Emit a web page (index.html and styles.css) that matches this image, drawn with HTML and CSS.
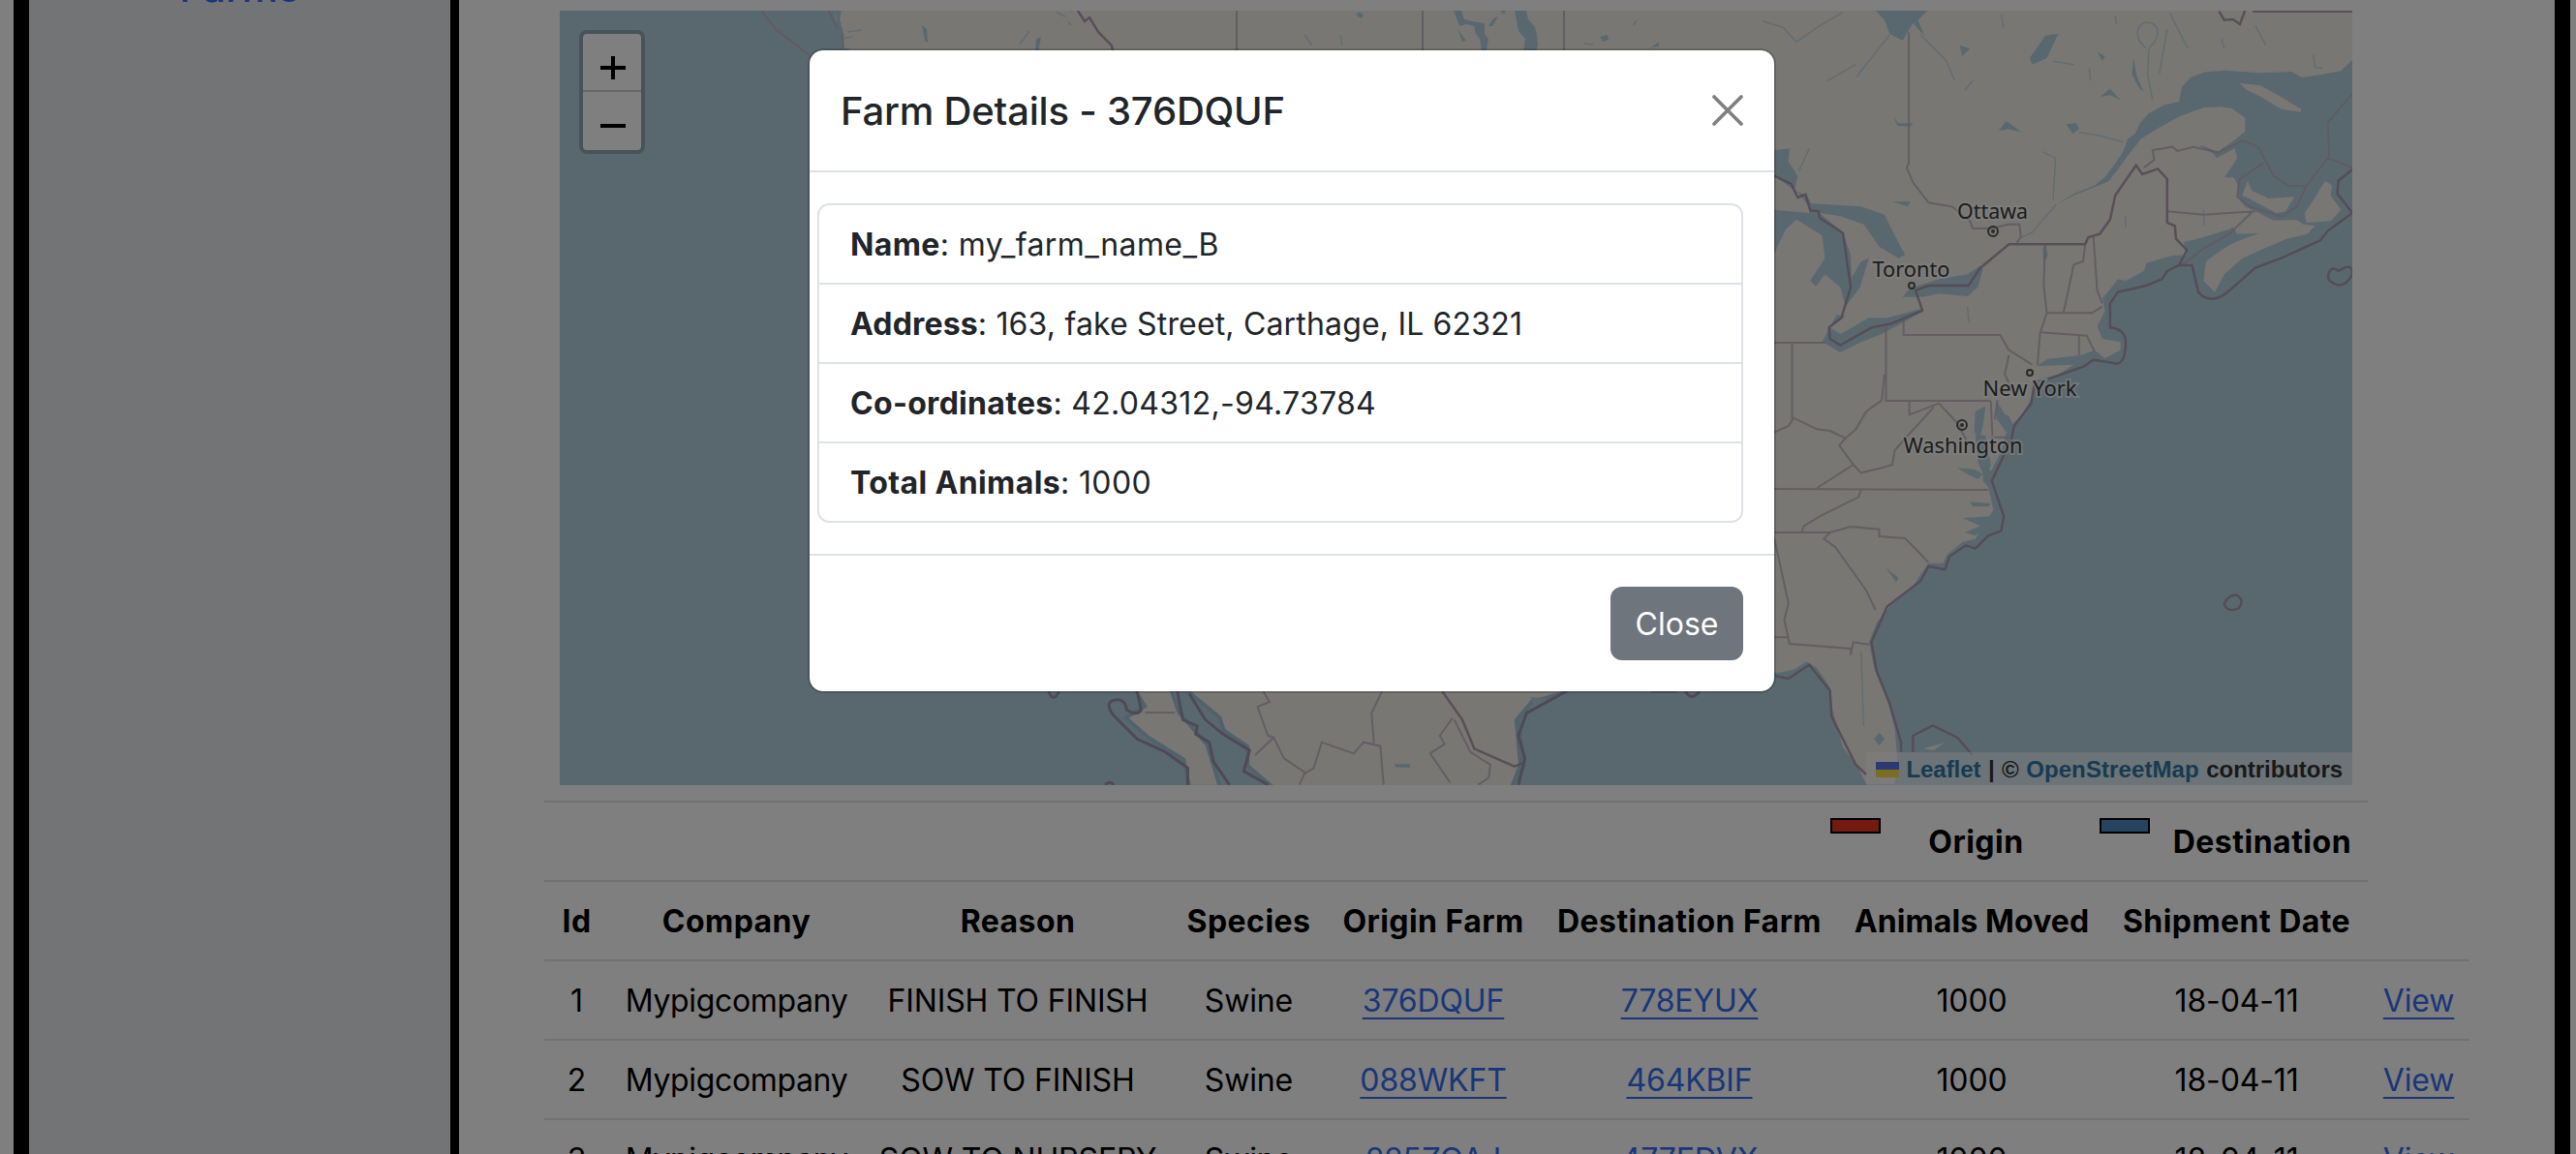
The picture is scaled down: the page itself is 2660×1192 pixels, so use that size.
FILE: index.html
```html
<!DOCTYPE html>
<html lang="en">
<head>
<meta charset="utf-8">
<title>Shipments</title>
<link rel="stylesheet" href="styles.css">
</head>
<body>
<div class="app">
  <nav class="sidebar"><a class="sidebar-link" href="#">Farms</a></nav>
  <main class="content">
    <section class="map">
      <svg class="map-tiles" viewBox="578 11 1851 800" preserveAspectRatio="none">
        <!-- North-west coast -->
        <path class="land" d="M862 11L863 20L868 32L871 36L871 50L876 50L884 58L1900 58V11Z"/>
        <path class="admin" d="M786 11L801 30L837 58M856 11L862 24L870 36L871 50M1277 11V58M1469 11V58M1615 11V58"/>
        <path class="country" d="M1113 11L1120 22L1125 18L1134 33L1148 47L1150 58"/>
        <path class="water" d="M862 11H869L867 20L870 30L872 38L866 32ZM952 26L957 30L958 44L955 42ZM1070 40L1075 38L1072 55H1069ZM1400 15L1404 12L1408 16L1405 19ZM1501 11H1509L1512 20L1520 22L1528 23L1533 24L1533 35L1537 40L1535 52H1530L1528 40L1524 35L1522 27L1514 25L1507 27ZM1505 30L1514 42L1510 43ZM1537 27L1542 19L1547 17L1541 27ZM1549 11H1555L1553 15ZM1564 11H1576L1578 20L1585 28L1587 36L1588 47L1586 53H1573L1575 40L1568 32ZM1652 38L1660 36L1661 41L1655 43ZM1703 50L1715 42L1726 41L1720 46Z"/>
        <path class="stream" d="M870 40L880 38M875 33L890 31M1053 46L1063 32M1103 22L1106 26M1091 13L1100 17M1347 36L1355 47M1384 36L1386 47M1636 45L1645 46M1687 26L1690 21M1778 27L1786 31M1850 50L1820 28L1805 24"/>
        <!-- Eastern seaboard -->
        <g transform="translate(1820 0) scale(.5357 .33333)">
          <path class="land" d="M-200 33H1137V185L1115 220L1080 230L1040 240L1020 222L960 226L890 218L850 224L825 240L808 270L803 315L775 325L758 340L745 350L728 380L718 415L704 430L695 470L678 510L660 548L640 575L600 600L565 635L600 605L645 577L667 562L685 525L705 480L730 430L765 395L805 360L850 334L880 331L905 336L930 365L930 408L905 440L885 462L878 472L850 452L840 450L868 475L875 490L910 460L915 490L905 515L890 550L908 550L915 570L918 615L930 640L950 655L900 710L850 735L812 750L817 790L790 792L740 815L735 840L700 870L685 865L665 905L655 925L660 965L645 1010L655 1050L690 1060L690 1085L660 1110L640 1085L615 1100L550 1112L527 1135L600 1130L570 1160L525 1180L520 1230L500 1285L478 1320L470 1290L450 1240L452 1300L470 1340L460 1400L440 1460L425 1425L425 1490L435 1510L445 1580L410 1670L385 1680L355 1720L348 1745L320 1745L300 1790L290 1820L245 1880L220 1930L205 1990L215 2070L240 2160L255 2260L260 2360L255 2430H200L185 2380L155 2315L135 2200L130 2130L105 2070L85 2050L60 2075L30 2085L-200 2060Z"/>
          <path class="land" d="M905 700L950 655L985 683L1030 682L1042 695L1065 700L1050 725L1010 740L960 775L925 800L890 850L872 905L850 870L855 810L880 780L905 755L935 735L960 722L915 725ZM1085 560L1098 575L1095 605L1115 650L1095 685L1048 690L1045 660L1058 630ZM935 560L943 590L975 615L1025 610L1008 655L990 660L955 630L925 605ZM920 258L960 265L1005 305L1038 338V347L1000 338L960 300L930 275ZM310 2320L350 2302L330 2325Z"/>
          <path class="water" d="M218 33H318L300 62L312 112L290 72L270 125L245 105L235 62ZM23 465L52 460L50 500L68 545L62 590L85 605L105 660L90 640L70 600L23 545ZM90 630L190 640L235 665L255 730L275 790L262 800L225 765L195 695L150 670L110 660L155 720L170 790L172 860L190 810L205 800L188 890L160 950L150 890L120 850L103 888L92 870L120 800L115 730L65 680L45 710L30 760L23 785V650L90 660ZM143 975L160 980L130 1015L150 1035L205 985L240 985L305 958L310 965L230 1035L190 1060L150 1092L115 1060ZM300 885L340 865L395 850L418 825L425 835L415 890L395 918L340 910L310 920H270L280 900ZM570 105L548 180L520 200L515 180L545 110ZM253 362L262 382H290L285 392L260 390ZM585 385L605 382L610 400L598 415ZM455 405L470 375L500 410L475 400ZM380 140L400 150L385 175ZM645 160L660 175L655 190ZM715 180L722 240L735 285L725 270L712 230ZM545 755L550 790L542 820L540 770ZM250 625L285 625L280 640ZM650 300L670 275L690 310L670 295ZM408 1340L410 1275L430 1258L425 1320L420 1350ZM455 1275L475 1290L485 1320L470 1330ZM410 1345L430 1350L440 1440L430 1490L415 1430ZM375 1450L410 1455L425 1470L415 1485L390 1465ZM400 1555L440 1560L435 1570L405 1570ZM385 1605L440 1600L450 1620L410 1660L390 1650L420 1630ZM215 2290L225 2270L235 2290L225 2310ZM238 1760L262 1790L258 1805Z"/>
          <path class="stream" d="M740 150C710 110 725 70 740 70C765 70 770 110 745 150L742 230L752 310M245 108L180 240M305 108L355 190L370 250M610 410L650 420L695 440M565 635L520 720L500 735M850 650L852 700M780 90L765 230M680 50L682 75M885 120L890 150M785 40L820 150M540 470L565 490L560 620M65 130L110 80L155 38M0 65L40 85L65 130M90 460L70 530M125 250L180 200M460 45L465 85M405 250L390 280M700 670V705M395 950L398 1000M190 2020L195 2250M600 200L560 190M630 210L632 250M950 80L970 140M1062 170L1065 210H1080"/>
          <path class="admin" d="M282 100V505L278 520L290 565L320 628L365 640L400 685L405 708L440 708L475 695H495L498 735L490 752M780 655L850 665L950 655M735 520L755 495L752 465L790 455L800 468L830 455L878 472L925 435L955 455L985 545L1015 577H1048L1090 490L1137 520M1137 290L1090 380L1092 485M965 505L920 555L915 610L940 640L1000 672L1030 640L1048 577M945 655L900 725L850 770L810 820M545 755L542 885L548 970L535 1032L530 1130M548 970H635L655 950M622 755L618 810L600 820L580 970M638 735L645 900L655 940M535 1030L625 1040L640 1090M610 1040V1100M272 990V1038H458L475 1085L520 1130M475 1100L467 1160L485 1220M238 1010V1242H440M440 1242L443 1350M23 1062H120M57 1062V1300M235 1160L230 1240L200 1275L180 1330L160 1358L130 1335L105 1330L60 1295L50 1320L23 1340M160 1358L148 1380L175 1440L105 1512M175 1440L190 1465L230 1450L250 1440L255 1395L280 1350L330 1262M283 1242V1285L340 1250L375 1310L395 1370M23 1515L435 1518M190 1518L185 1540L110 1600L80 1630L75 1650M23 1650H130L118 1670L140 1695L180 1785L200 1830L218 1890M130 1650L170 1632L225 1640V1662L275 1668L320 1743M23 1670L50 1870L42 1920L52 1995L170 2010V2030L175 1990L205 1997M23 1975H48M453 1240L448 1300M440 1355H475"/>
          <path class="country" d="M23 545L55 570L68 612L83 603L92 652L108 655L110 675L155 722L170 890L152 985L128 1015L130 1050L150 1070L210 1015L250 1002L308 962L295 900L320 885H397L420 830L475 757H622L628 735L650 725L670 680L680 605L720 512L732 540L762 523L780 555V690L795 700L797 740L818 775L803 822H828L840 905Q865 950 900 900L950 830L1000 800L1075 745L1090 715L1137 660L1108 600L1110 560L1137 525M803 822L780 840L770 865L740 885L685 905L670 940V1015Q700 1020 700 1060Q700 1120 685 1127L638 1115L620 1135L550 1175M525 1180L518 1250L485 1320L480 1360L442 1490L465 1600L460 1645L435 1660L410 1700L392 1690L360 1725L352 1765L320 1755L305 1800L240 1880L210 1990L220 2080L245 2180L267 2300V2330M25 2095L50 2103L90 2060L130 2140L133 2220L180 2370L200 2400M290 2330V2280L328 2248L375 2285L405 2340M880 35L890 62L907 60L920 75L930 33M945 35H1137M1090 855Q1095 820 1110 840Q1137 810 1137 850Q1120 900 1098 875Q1090 870 1090 855ZM890 1870Q900 1840 915 1845Q930 1860 918 1885Q895 1900 890 1870Z"/>
        </g>
        <!-- Mexico and the Gulf -->
        <g transform="translate(540 700) scale(.829 .33333)">
          <path class="shore" d="M765 38L778 90L755 125L780 180L825 250L832 332H865L850 210L815 110L805 38ZM830 38L870 120L875 160L905 210V270L935 334H1230L1245 270L1237 130L1255 70L1300 38Z"/>
          <path class="land" d="M765 38L778 90L755 125L780 180L825 250L832 332H865L850 210L815 110L805 38ZM830 38L870 120L875 160L905 210V270L935 334H1230L1240 270L1235 130L1255 70L1300 38Z"/>
          <path class="water" d="M1085 268H1105V278H1088ZM1255 60L1275 65L1260 90Z"/>
          <path class="admin" d="M922 42L930 75L915 90L928 180L935 185L948 250L975 295L985 280L995 200L1035 235L1047 200L1068 212L1072 332M1070 42L1057 110L1060 205M935 185L912 240M975 290L967 332M1158 125L1142 180L1148 205L1130 235L1155 325M1160 130L1180 230L1205 270L1203 310L1190 332M775 108H812"/>
          <path class="country" d="M1145 42L1170 130L1185 220L1235 275L1248 262"/>
          <path class="coast" d="M1300 42L1250 110L1240 180L1248 250L1240 332M765 42L770 100Q765 120 752 100Q750 60 735 70Q725 80 735 115L765 190L800 230L828 280L828 332M815 42L822 130L840 150L838 175L855 200L860 260L880 332M830 50L850 130L872 175L905 225L898 290L928 332M655 42Q660 80 668 42M1405 42H1437M1448 42Q1455 75 1466 42M725 332Q731 318 736 332"/>
        </g>
        <g class="place">
          <text x="2057.500" y="226" textLength="73" lengthAdjust="spacingAndGlyphs">Ottawa</text>
          <text x="1973.500" y="286" textLength="80" lengthAdjust="spacingAndGlyphs">Toronto</text>
          <text x="2096" y="409" textLength="97" lengthAdjust="spacingAndGlyphs">New York</text>
          <text x="2027" y="468" textLength="123" lengthAdjust="spacingAndGlyphs">Washington</text>
        </g>
        <g class="pin">
          <circle cx="2058" cy="239" r="5"/><circle class="dot" cx="2058" cy="239" r="2"/>
          <circle cx="1974" cy="295" r="3"/><circle cx="2096" cy="385" r="3"/>
          <circle cx="2026" cy="439" r="5"/><circle class="dot" cx="2026" cy="439" r="2"/>
        </g>
      </svg>
      <div class="zoom">
        <a class="zoom-btn"><svg width="26" height="26" viewBox="0 0 26 26"><path d="M0 13H26M13 1V25"/></svg></a>
        <a class="zoom-btn"><svg width="26" height="26" viewBox="0 0 26 26"><path d="M0 13H26"/></svg></a>
      </div>
      <div class="attribution">
        <svg class="flag" width="24" height="16" viewBox="0 0 24 16"><path fill="#5674e0" d="M0 0H24V8H0Z"/><path fill="#f9da49" d="M0 8H24V16H0Z"/></svg>
        <a>Leaflet</a><span>|</span><span>©</span><a class="osm">OpenStreetMap</a><span>contributors</span>
      </div>
    </section>
    <table class="shipments">
      <colgroup><col class="c-id"><col class="c-company"><col class="c-reason"><col class="c-species"><col class="c-origin"><col class="c-dest"><col class="c-animals"><col class="c-date"><col class="c-view"></colgroup>
      <tbody>
        <tr class="legend-row"><td colspan="8"><div class="legend"><span class="swatch origin"></span><b class="origin-label">Origin</b><span class="swatch dest"></span><b>Destination</b></div></td></tr>
        <tr><th>Id</th><th>Company</th><th>Reason</th><th>Species</th><th>Origin Farm</th><th>Destination Farm</th><th class="snug">Animals Moved</th><th>Shipment Date</th><th></th></tr>
        <tr><td>1</td><td>Mypigcompany</td><td>FINISH TO FINISH</td><td>Swine</td><td><a>376DQUF</a></td><td><a>778EYUX</a></td><td>1000</td><td>18-04-11</td><td><a>View</a></td></tr>
        <tr><td>2</td><td>Mypigcompany</td><td>SOW TO FINISH</td><td>Swine</td><td><a>088WKFT</a></td><td><a>464KBIF</a></td><td>1000</td><td>18-04-11</td><td><a>View</a></td></tr>
        <tr><td>3</td><td>Mypigcompany</td><td>SOW TO NURSERY</td><td>Swine</td><td><a>225ZQAJ</a></td><td><a>477EDVX</a></td><td>1000</td><td>18-04-11</td><td><a>View</a></td></tr>
      </tbody>
    </table>
  </main>
</div>
<div class="backdrop"></div>
<div class="modal">
  <header class="modal-header">
    <h5>Farm Details - 376DQUF</h5>
    <button class="dismiss" aria-label="Close"><svg width="32" height="32" viewBox="0 0 32 32"><path d="M2 2L30 30M30 2L2 30"/></svg></button>
  </header>
  <div class="modal-body">
    <ul class="details">
      <li><b>Name</b>: my_farm_name_B</li>
      <li><b>Address</b>: 163, fake Street, Carthage, IL 62321</li>
      <li><b>Co-ordinates</b>: 42.04312,-94.73784</li>
      <li><b>Total Animals</b>: 1000</li>
    </ul>
  </div>
  <footer class="modal-footer"><button class="btn">Close</button></footer>
</div>
</body>
</html>
```
FILE: styles.css
```css
* { box-sizing: border-box; }
body {
  margin: 0;
  height: 1192px;
  overflow: hidden;
  position: relative;
  background: #fff;
  color: #212529;
  font: 32px/48px Inter, "Liberation Sans", sans-serif;
}
.app { display: flex; height: 1192px; padding: 0 6px 0 14px; overflow: hidden; }
.sidebar {
  flex: none;
  width: 460px;
  border-left: 16px solid #000;
  border-right: 9px solid #000;
  background: #e7e8ec;
  display: flex;
  justify-content: center;
  align-items: flex-start;
}
.sidebar-link {
  margin-top: -37px;
  color: #346df0;
  font-size: 42px;
  font-weight: 500;
  text-decoration: none;
}
.content {
  flex: 1;
  min-width: 0;
  padding: 11px 0 0 88px;
  border-right: 16px solid #000;
  color: #000;
}
.map { position: relative; width: 1851px; height: 800px; margin: 0 0 16px 16px; background: #b3d1de; overflow: hidden; }
.map-tiles { display: block; width: 100%; height: 100%; }
.map-tiles path { vector-effect: non-scaling-stroke; }
.land { fill: #f1efe9; }
.water { fill: #b3d1de; }
.stream { fill: none; stroke: #b3d1de; stroke-width: 1.5; opacity: .7; }
.admin { fill: none; stroke: #c2b3c2; stroke-width: 2; opacity: .85; }
.country { fill: none; stroke: #a891a6; stroke-width: 2.5; opacity: .85; }
.coast { fill: none; stroke: #9c93ac; stroke-width: 3; }
.shore { fill: none; stroke: #a4c5d4; stroke-width: 8; }
.place { font: 22px "Noto Sans", sans-serif; fill: #3a3a3a; stroke: #fff; stroke-opacity: .6; stroke-width: 4; paint-order: stroke; text-anchor: middle; }
.pin { fill: none; stroke: #555; stroke-width: 2; }
.pin .dot { fill: #555; stroke: none; }
.zoom {
  position: absolute;
  top: 20px;
  left: 20px;
  width: 68px;
  border: 4px solid rgba(0, 0, 0, .2);
  border-radius: 8px;
  background: #fff;
  background-clip: padding-box;
}
.zoom-btn { display: flex; align-items: center; justify-content: center; height: 60px; padding: 12px 0 0 2px; }
.zoom-btn + .zoom-btn { padding-top: 10px; }
.zoom-btn:first-child { height: 60px; border-bottom: 2px solid #ccc; }
.zoom-btn svg { fill: none; stroke: #000; stroke-width: 4; }
.attribution {
  position: absolute;
  right: 0;
  bottom: 0;
  width: 502px;
  height: 34px;
  padding: 2px 10px 0;
  display: flex;
  align-items: center;
  gap: 7px;
  justify-content: space-between;
  background: rgba(255, 255, 255, .5);
  color: #333;
  font: bold 24px/32px "Liberation Sans", Arial, sans-serif;
  letter-spacing: 0;
}
.attribution { letter-spacing: -.05px; white-space: nowrap; }
.attribution a { color: #2f76a5; }
.attribution .osm { letter-spacing: .1px; }
.shipments { table-layout: fixed; width: 1988px; border-collapse: separate; border-spacing: 0; text-align: center; }
.c-id { width: 67px; } .c-company { width: 263px; } .c-reason { width: 318px; }
.c-species { width: 159px; } .c-origin { width: 222px; } .c-dest { width: 307px; }
.c-animals { width: 276px; } .c-date { width: 271px; } .c-view { width: 105px; }
.shipments th, .shipments td { height: 82px; padding: 17px 0 15px; border-bottom: 2px solid #dfe2e6; white-space: nowrap; }
.shipments td { letter-spacing: -.15px; }
.shipments td:nth-child(2) { letter-spacing: -.35px; }
.shipments th { font-weight: 700; letter-spacing: .45px; }
.shipments th.snug { letter-spacing: .12px; }
.shipments .legend-row td { height: 84px; border-top: 2px solid #dfe2e6; }
.shipments a { color: #346df0; text-decoration: underline; text-decoration-thickness: 2px; text-underline-offset: 6px; text-decoration-skip-ink: none; }
.legend { display: flex; justify-content: flex-end; padding-right: 17px; letter-spacing: .5px; }
.swatch { width: 52px; height: 16px; margin-top: -1px; border: 2px solid #000; }
.swatch.origin { background: #e93423; margin-right: 49px; }
.swatch.dest { background: #4d86c0; margin-right: 24px; }
.origin-label { margin-right: 78px; }
.backdrop { position: absolute; inset: 0; background: rgba(0, 0, 0, .5); }
.modal {
  position: absolute;
  top: 50px;
  left: 834px;
  width: 1000px;
  height: 666px;
  border: 2px solid rgba(0, 0, 0, .175);
  border-radius: 16px;
  background: #fff;
  background-clip: padding-box;
}
.modal-header { display: flex; align-items: center; justify-content: space-between; height: 126px; padding: 0 32px; border-bottom: 2px solid #dee2e6; }
.modal-header h5 { margin: 2px 0 0; font-size: 40px; font-weight: 500; line-height: 60px; letter-spacing: -.2px; }
.dismiss { display: flex; padding: 0; border: 0; background: none; }
.dismiss svg { fill: none; stroke: #7f7f7f; stroke-width: 3.6; stroke-linecap: round; }
.modal-body { padding: 32px 32px 32px 8px; }
.details { list-style: none; margin: 0; padding: 0; border: 2px solid #dee2e6; border-radius: 12px; letter-spacing: .17px; }
.details li { height: 82px; padding: 17px 32px 15px; border-bottom: 2px solid #dee2e6; }
.details li:first-child { letter-spacing: .4px; }
.details li:nth-child(3) { letter-spacing: .3px; }
.details li:last-child { height: 80px; border-bottom: 0; letter-spacing: .38px; }
.modal-footer { display: flex; justify-content: flex-end; padding: 32px; border-top: 2px solid #dee2e6; }
.btn { width: 137px; height: 76px; padding: 2px 0 0; border: 0; border-radius: 12px; background: #6e757c; color: #fff; font: inherit; }
```
